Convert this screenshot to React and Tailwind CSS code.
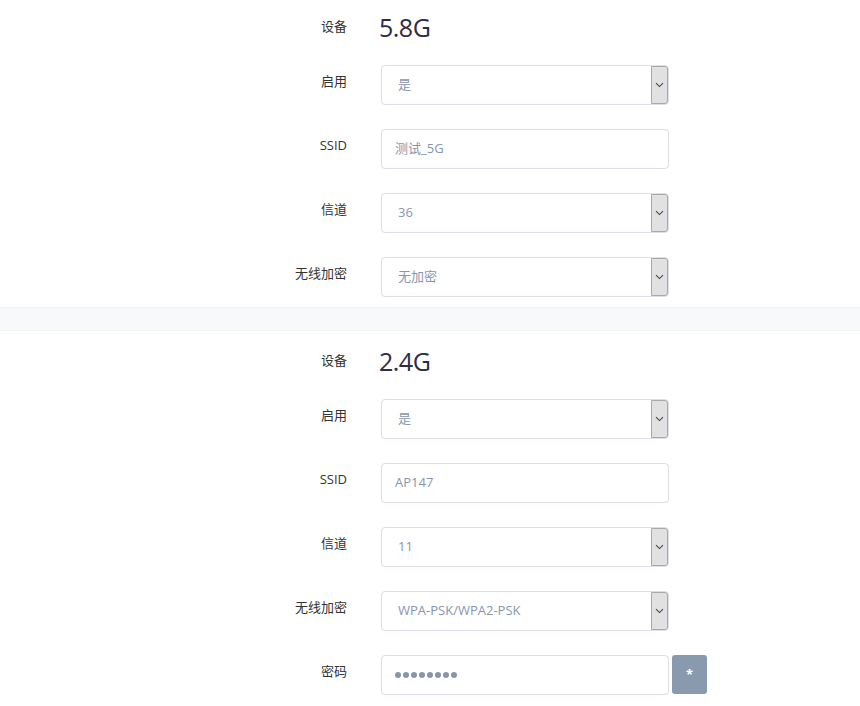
import React from 'react';

const font = { fontFamily: '"Open Sans", "Noto Sans CJK SC", sans-serif' };

const Chevron = () => (
  <svg width="9" height="6" viewBox="0 0 9 6" fill="none">
    <path d="M1 1.2 L4.5 4.6 L8 1.2" stroke="#444" strokeWidth="1.1" />
  </svg>
);

const Label = ({ children }) => (
  <div className="w-[347px] shrink-0 pt-[6px] text-right text-[13px] leading-5 text-[#333]">{children}</div>
);

const TextInput = ({ value }) => (
  <div className="flex h-10 w-[288px] items-center rounded-[4px] border border-[#dcdfe6] bg-white pl-[13px] text-[13px] text-[#8796ad]">
    {value}
  </div>
);

const Select = ({ value }) => (
  <div className="flex h-10 w-[288px] items-stretch rounded-[4px] border border-[#dcdfe6] bg-white text-[13px] text-[#8796ad]">
    <div className="flex flex-1 items-center pl-[16px]">{value}</div>
    <div className="flex w-[17px] items-center justify-center rounded-r-[3px] border border-[#a9a9a9] bg-[#e1e1e1]">
      <Chevron />
    </div>
  </div>
);

const Row = ({ label, children }) => (
  <div className="flex gap-[34px]">
    <Label>{label}</Label>
    {children}
  </div>
);

const Section = ({ device, ssid, channel, enc, password, top }) => (
  <div className={`${top} flex flex-col bg-white`}>
    <div className="mb-[18px] flex h-10 items-center gap-[32px]">
      <div className="w-[347px] shrink-0 text-right text-[13px] text-[#333]">设备</div>
      <div className="text-[25px] leading-none tracking-[-0.5px] text-[#2c2d48]">{device}</div>
    </div>
    <div className="flex flex-col gap-6">
      <Row label="启用"><Select value="是" /></Row>
      <Row label="SSID"><TextInput value={ssid} /></Row>
      <Row label="信道"><Select value={channel} /></Row>
      <Row label="无线加密"><Select value={enc} /></Row>
      {password && (
        <Row label="密码">
          <div className="flex items-start gap-[3px]">
            <div className="flex h-10 w-[288px] items-center gap-[2px] rounded-[4px] border border-[#dcdfe6] bg-white pl-[13px]">
              {Array.from({ length: 8 }).map((_, i) => (
                <span key={i} className="h-[6px] w-[6px] rounded-full bg-[#8796ad]" />
              ))}
            </div>
            <button className="flex h-[39px] w-[35px] items-center justify-center rounded-[3px] bg-[#8a9aae] text-[13px] font-bold text-white">*</button>
          </div>
        </Row>
      )}
    </div>
  </div>
);

export default function App() {
  return (
    <div className="min-h-[706px] w-[860px] bg-white" style={font}>
      <div className="pb-[10px]">
        <Section top="pt-[7px]" device="5.8G" ssid="测试_5G" channel="36" enc="无加密" />
      </div>
      <div className="h-[24px] border-y border-[#f1f2f5] bg-[#f8f9fa]" />
      <Section top="pt-[10px]" device="2.4G" ssid="AP147" channel="11" enc="WPA-PSK/WPA2-PSK" password />
    </div>
  );
}
